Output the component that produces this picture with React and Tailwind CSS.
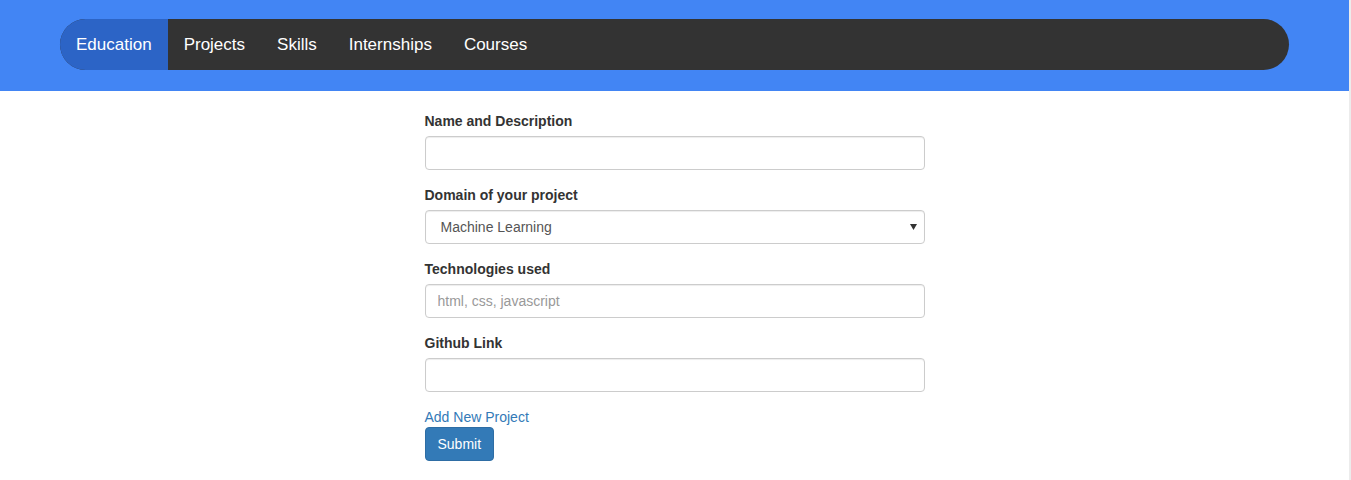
import React from "react";

const font = { fontFamily: '"Liberation Sans", Arial, Helvetica, sans-serif' };

function Label({ children }) {
  return <label className="block mb-[5px] text-[14px] leading-[20px] font-bold text-[#333]">{children}</label>;
}

const inputCls =
  "block w-full h-[34px] px-[12px] py-[6px] text-[14px] leading-[20px] text-[#555] bg-white border border-[#ccc] rounded-[4px] shadow-[inset_0_1px_1px_rgba(0,0,0,0.075)] outline-none placeholder:text-[#999]";

export default function App() {
  return (
    <div className="flex min-h-[480px] bg-white" style={font}>
      <div className="flex-1">
        <header className="h-[91px] bg-[#4285f4] pt-[19px] px-[60px]">
          <nav className="h-[51px] bg-[#333] rounded-full overflow-hidden flex">
            {["Education", "Projects", "Skills", "Internships", "Courses"].map((t, i) => (
              <a
                key={t}
                href="#"
                className={
                  "flex items-center px-4 text-[17px] text-white " + (i === 0 ? "bg-[#2c64c6]" : "")
                }
              >
                {t}
              </a>
            ))}
          </nav>
        </header>
        <main className="w-[500px] mx-auto pt-[20px]">
          <div className="mb-[15px]">
            <Label>Name and Description</Label>
            <input className={inputCls} type="text" />
          </div>
          <div className="mb-[15px]">
            <Label>Domain of your project</Label>
            <div className="relative">
              <select className={inputCls + " appearance-none pl-[15px]"} defaultValue="ml">
                <option value="ml">Machine Learning</option>
                <option value="web">Web Development</option>
              </select>
              <svg className="absolute right-[8px] top-[14px] pointer-events-none" width="7" height="6" viewBox="0 0 7 6">
                <path d="M0 0 H7 L3.5 6 Z" fill="#333" />
              </svg>
            </div>
          </div>
          <div className="mb-[15px]">
            <Label>Technologies used</Label>
            <input className={inputCls} type="text" placeholder="html, css, javascript" />
          </div>
          <div className="mb-[15px]">
            <Label>Github Link</Label>
            <input className={inputCls} type="text" />
          </div>
          <a href="#" className="block text-[14px] leading-[20px] text-[#337ab7]">Add New Project</a>
          <button className="h-[34px] px-[12px] text-[14px] leading-[20px] text-white bg-[#337ab7] border border-[#2e6da4] rounded-[4px]">
            Submit
          </button>
        </main>
      </div>
      <div className="w-[2px] bg-[#ececec]" />
    </div>
  );
}
